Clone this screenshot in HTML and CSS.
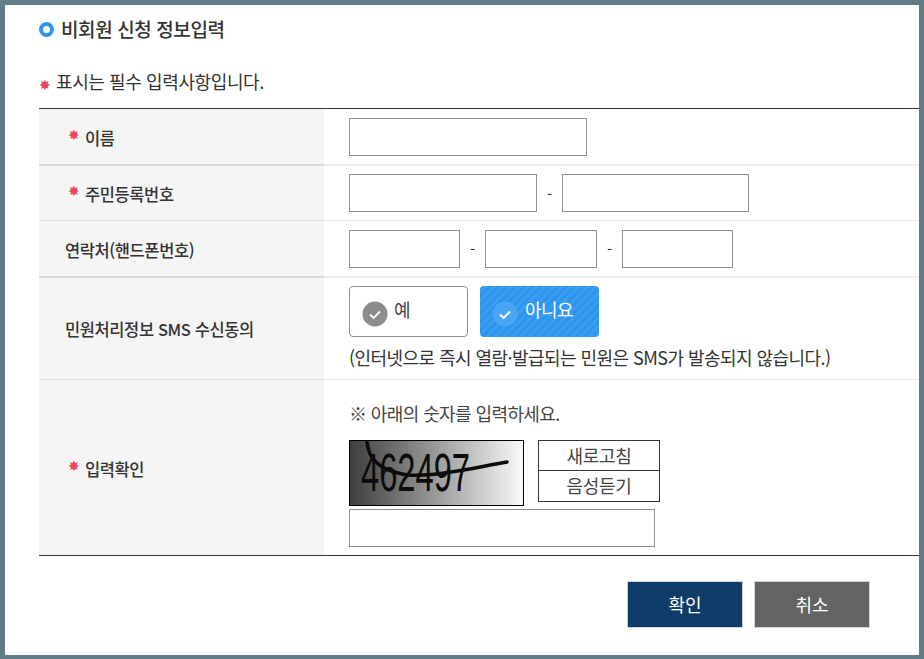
FILE: index.html
```html
<!DOCTYPE html>
<html lang="ko">
<head>
<meta charset="utf-8">
<title>비회원 신청 정보입력</title>
<link rel="stylesheet" href="styles.css">
</head>
<body>
<main class="frame">
  <h1 class="title"><span class="ring"></span>비회원 신청 정보입력</h1>
  <p class="note"><span class="star star-note">✸</span>표시는 필수 입력사항입니다.</p>
  <div class="form">
    <div class="row row-1">
      <div class="label"><span class="star">✸</span>이름</div>
      <div class="field"><span class="input w-238"></span></div>
    </div>
    <div class="row row-2">
      <div class="label"><span class="star">✸</span>주민등록번호</div>
      <div class="field">
        <span class="input w-188"></span><span class="dash d-24">-</span><span class="input w-187"></span>
      </div>
    </div>
    <div class="row row-3">
      <div class="label">연락처(핸드폰번호)</div>
      <div class="field">
        <span class="input w-111"></span><span class="dash d-25">-</span><span class="input w-112"></span><span class="dash d-25">-</span><span class="input w-111"></span>
      </div>
    </div>
    <div class="row row-4">
      <div class="label">민원처리정보 SMS 수신동의</div>
      <div class="field field-col">
        <div class="choices">
          <div class="choice choice-off">
            <svg class="check" width="26" height="26" viewBox="0 0 26 26"><circle cx="13" cy="13" r="12.5" fill="#8c8c8c"/><path d="M8 13.5l3.6 3.4L18 10.5" fill="none" stroke="#fff" stroke-width="2"/></svg>
            <span class="choice-text">예</span>
          </div>
          <div class="choice choice-on">
            <svg class="check" width="26" height="26" viewBox="0 0 26 26"><circle cx="13" cy="13" r="12.5" fill="#4ba6f5"/><path d="M8 13.5l3.6 3.4L18 10.5" fill="none" stroke="#fff" stroke-width="2"/></svg>
            <span class="choice-text">아니요</span>
          </div>
        </div>
        <p class="hint">(인터넷으로 즉시 열람·발급되는 민원은 SMS가 발송되지 않습니다.)</p>
      </div>
    </div>
    <div class="row row-5">
      <div class="label"><span class="star">✸</span>입력확인</div>
      <div class="field field-col">
        <p class="captcha-note">※ 아래의 숫자를 입력하세요.</p>
        <div class="captcha-row">
          <svg class="captcha" width="175" height="66" viewBox="0 0 175 66">
            <defs><linearGradient id="cg"><stop offset="0" stop-color="#3d3d3d"/><stop offset="1" stop-color="#fafafa"/></linearGradient></defs>
            <rect x="0.5" y="0.5" width="174" height="65" fill="url(#cg)" stroke="#000"/>
            <text transform="translate(12 51) scale(.605 1)" font-family="Liberation Sans, sans-serif" font-size="54" fill="#0c0c0c">462497</text>
            <path d="M18 2c1 8 3 14 7 18 8 9 20 13 34 15 15 1 30-1 43-3 20-3 38-7 56-10" fill="none" stroke="#0c0c0c" stroke-width="3.5" stroke-linecap="round"/>
          </svg>
          <div class="captcha-btns">
            <div class="cbtn">새로고침</div>
            <div class="cbtn cbtn-2">음성듣기</div>
          </div>
        </div>
        <span class="input w-306"></span>
      </div>
    </div>
  </div>
  <div class="actions">
    <div class="btn btn-ok">확인</div>
    <div class="btn btn-cancel">취소</div>
  </div>
</main>
</body>
</html>
```
FILE: styles.css
```css
* { box-sizing: border-box; }
html, body { margin: 0; height: 100%; }
body {
  width: 924px;
  height: 659px;
  overflow: hidden;
  background: #5f7c87;
  padding: 5px 5px 4px;
  font-family: "Noto Sans CJK KR", "Noto Sans", sans-serif;
  color: #333;
}
.frame {
  background: #fff;
  height: 650px;
  padding-left: 34px;
}
.title {
  display: flex;
  align-items: center;
  margin: 0;
  padding-top: 11px;
  height: 37px;
  font-size: 19px;
  font-weight: 500;
  letter-spacing: -0.4px;
  line-height: 26px;
  color: #333;
}
.ring {
  width: 15px;
  height: 15px;
  border: 4px solid #2e95ea;
  border-radius: 50%;
  margin-right: 7px;
}
.note {
  margin: 0;
  padding-top: 26px;
  height: 66px;
  font-size: 18px;
  line-height: 26px;
  letter-spacing: -0.4px;
  color: #333;
}
.star {
  display: inline-block;
  width: 17px;
  color: #e8475c;
  font-family: "DejaVu Sans", sans-serif;
  font-size: 14px;
  font-weight: 400;
  letter-spacing: 0;
  position: relative;
  top: -3px;
}
.star-note { top: 1px; }
.form {
  border-top: 1px solid #333;
  border-bottom: 1px solid #333;
  height: 448px;
}
.row {
  display: grid;
  grid-template-columns: 285px 1fr;
}
.row-1 { height: 57px; border-bottom: 2px solid #ececec; }
.row-2 { height: 55px; border-bottom: 1px solid #e6e6e6; }
.row-3 { height: 57px; border-bottom: 2px solid #ececec; }
.row-4 { height: 102px; border-bottom: 1px solid #e6e6e6; }
.row-5 { height: 175px; }
.label {
  display: flex;
  align-items: center;
  background: #f5f5f5;
  padding: 2px 0 0 26px;
  font-size: 16.5px;
  font-weight: 500;
  letter-spacing: -0.4px;
  color: #333;
}
.row-1 .label, .row-3 .label { box-shadow: 0 2px 0 #d8d8d8; }
.row-2 .label, .row-4 .label { box-shadow: 0 1px 0 #e0e0e0; }
.row-4 .label { padding-top: 0; }
.row-1 .label, .row-2 .label, .row-5 .label { padding-left: 29px; }
.field {
  display: flex;
  align-items: center;
  padding-left: 25px;
}
.field-col {
  flex-direction: column;
  align-items: flex-start;
}
.row-4 .field { padding-top: 8px; }
.row-5 .field { padding-top: 20px; }
.input {
  display: block;
  height: 38px;
  border: 1px solid #8f8f8f;
  background: #fff;
  flex: none;
}
.w-238 { width: 238px; }
.w-188 { width: 188px; }
.w-187 { width: 187px; }
.w-111 { width: 111px; }
.w-112 { width: 112px; }
.w-306 { width: 306px; height: 38px; margin-top: 3px; }
.dash {
  text-align: center;
  font-size: 15px;
  color: #333;
}
.d-24 { width: 25px; }
.d-25 { width: 25px; }
.choices {
  display: flex;
  gap: 12px;
}
.choice {
  display: flex;
  align-items: center;
  width: 119px;
  height: 51px;
  border-radius: 4px;
  padding-left: 12px;
  font-size: 18px;
  letter-spacing: -0.5px;
}
.choice-off {
  background: #fff;
  border: 1px solid #8f8f8f;
  color: #444;
}
.choice-on {
  background: repeating-linear-gradient(135deg, #2d95ee 0 3px, #3b9df0 3px 6px);
  color: #fff;
}
.check { flex: none; margin-top: 4px; }
.choice-text { margin: -5px 0 0 6px; }
.choice-on .choice-text { margin-left: 7px; }
.hint {
  margin: 7px 0 0;
  font-size: 18px;
  line-height: 26px;
  letter-spacing: -0.55px;
  color: #333;
}
.captcha-note {
  margin: 0;
  font-size: 18px;
  line-height: 26px;
  letter-spacing: -0.6px;
  color: #444;
}
.captcha-row {
  display: flex;
  gap: 14px;
  margin-top: 14px;
}
.captcha { display: block; flex: none; }
.captcha-btns {
  width: 122px;
  height: 62px;
  display: flex;
  flex-direction: column;
}
.cbtn {
  height: 31px;
  border: 1px solid #333;
  font-size: 18px;
  line-height: 28px;
  text-align: center;
  letter-spacing: -0.3px;
  color: #444;
}
.cbtn-2 { border-top: 0; }
.actions {
  display: flex;
  gap: 11px;
  justify-content: flex-end;
  padding: 25px 49px 0 0;
}
.btn {
  width: 116px;
  height: 47px;
  border: 1px solid #cfd6dc;
  color: #fff;
  font-size: 18px;
  font-weight: 400;
  line-height: 44px;
  text-align: center;
}
.btn-ok { background: #0e3c68; }
.btn-cancel { background: #636363; }
```
